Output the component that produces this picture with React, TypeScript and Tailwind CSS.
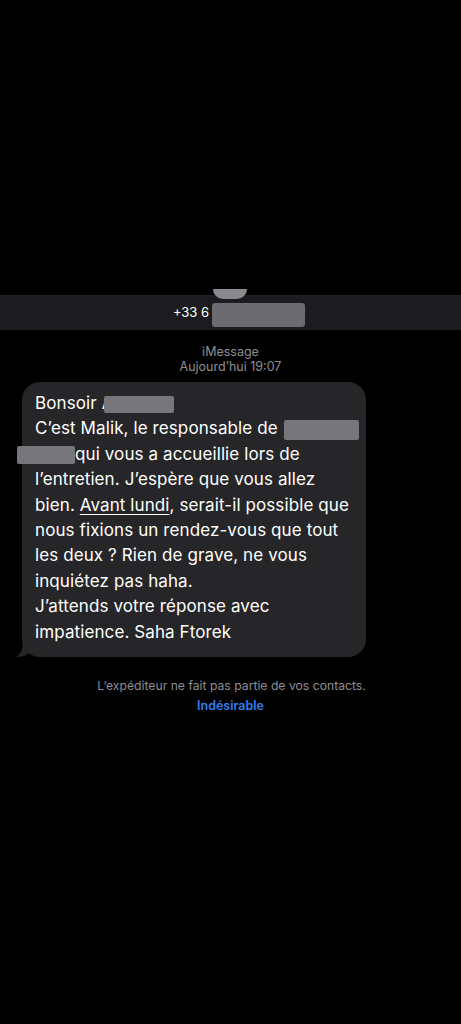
const Redact = ({ className }: { className: string }) => (
  <span className={`relative inline-block rounded-[2px] bg-[#77777b] align-middle ${className}`} />
);

export default function App() {
  return (
    <div className="min-h-[1024px] w-full bg-black font-['Inter','Liberation_Sans',sans-serif] text-white">
      <div className="h-[295px]" />

      {/* Bandeau contact */}
      <div className="relative flex h-[35px] items-center justify-center bg-[#1c1c1e] pl-[17px]">
        <div className="absolute left-[213px] top-[-6px] h-[10px] w-[34px] rounded-b-full bg-[#8a8a8e]" />
        <span className="text-[13px] leading-none text-white">+33 6</span>
        <span className="ml-[3px] mt-[4px] h-[24px] w-[93px] rounded-[3px] bg-[#6c6c70]" />
      </div>

      <div className="mt-[14px] flex flex-col items-center text-[12.5px] leading-[15px] text-[#8e8e93]">
        <span>iMessage</span>
        <span>Aujourd’hui 19:07</span>
      </div>

      {/* Bulle */}
      <div className="relative ml-[22px] mt-[8px] w-[344px] rounded-[18px] bg-[#262628] px-[13px] pb-[12px] pt-[9px] text-[17px] leading-[25.4px] tracking-[0.1px]">
        <svg className="absolute bottom-0 left-[-6px]" width="20" height="16" viewBox="0 0 20 16" aria-hidden>
          <path d="M7 0 C7 8 5 13 0 16 C6 16 11 14 14 11 L20 16 L20 0 Z" fill="#262628" />
        </svg>
        <div className="relative whitespace-nowrap">
          <div>
            Bonsoir A<Redact className="ml-[-9px] h-[17px] w-[70px]" />
          </div>
          <div>
            C’est Malik, le responsable de <Redact className="ml-[1px] h-[20px] w-[75px]" />
          </div>
          <div>
            <Redact className="ml-[-18px] h-[18px] w-[58px]" />
            qui vous a accueillie lors de
          </div>
          <div>l’entretien. J’espère que vous allez</div>
          <div>
            bien. <span className="underline decoration-1 underline-offset-[3px]">Avant lundi</span>, serait-il possible que
          </div>
          <div>nous fixions un rendez-vous que tout</div>
          <div>les deux ? Rien de grave, ne vous</div>
          <div>inquiétez pas haha.</div>
          <div>J’attends votre réponse avec</div>
          <div>impatience. Saha Ftorek</div>
        </div>
      </div>

      <div className="mt-[19px] flex flex-col items-center text-[12.5px] leading-[20px]">
        <span className="pl-[2px] text-[12.2px] text-[#8e8e93]">L’expéditeur ne fait pas partie de vos contacts.</span>
        <span className="font-semibold text-[#2f7ff0]">Indésirable</span>
      </div>
    </div>
  );
}
